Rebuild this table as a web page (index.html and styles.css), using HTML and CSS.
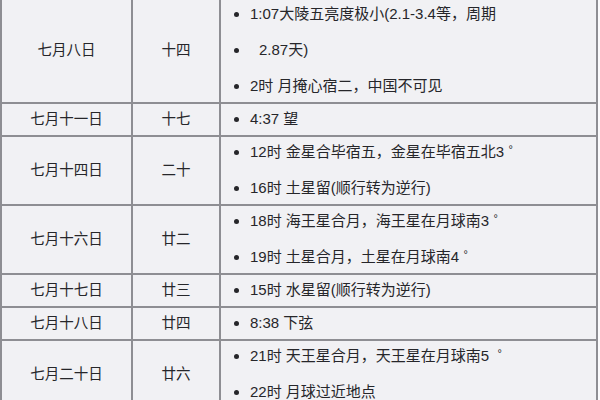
FILE: index.html
```html
<!DOCTYPE html>
<html lang="zh">
<head>
<meta charset="utf-8">
<link rel="stylesheet" href="styles.css">
</head>
<body>
<table class="almanac">
  <colgroup>
    <col class="c-date">
    <col class="c-lunar">
    <col class="c-events">
  </colgroup>
  <tbody>
    <tr>
      <td class="date">七月八日</td>
      <td class="lunar">十四</td>
      <td class="events"><ul>
        <li>1:07大陵五亮度极小(2.1-3.4等，周期</li>
        <li><span class="indent">2.87天)</span></li>
        <li>2时 月掩心宿二，中国不可见</li>
      </ul></td>
    </tr>
    <tr>
      <td class="date">七月十一日</td>
      <td class="lunar">十七</td>
      <td class="events"><ul><li>4:37 望</li></ul></td>
    </tr>
    <tr>
      <td class="date">七月十四日</td>
      <td class="lunar">二十</td>
      <td class="events"><ul>
        <li>12时 金星合毕宿五，金星在毕宿五北3 <span class="deg">°</span></li>
        <li>16时 土星留(顺行转为逆行)</li>
      </ul></td>
    </tr>
    <tr>
      <td class="date">七月十六日</td>
      <td class="lunar">廿二</td>
      <td class="events"><ul>
        <li>18时 海王星合月，海王星在月球南3 <span class="deg">°</span></li>
        <li>19时 土星合月，土星在月球南4 <span class="deg">°</span></li>
      </ul></td>
    </tr>
    <tr>
      <td class="date">七月十七日</td>
      <td class="lunar">廿三</td>
      <td class="events"><ul><li>15时 水星留(顺行转为逆行)</li></ul></td>
    </tr>
    <tr>
      <td class="date">七月十八日</td>
      <td class="lunar">廿四</td>
      <td class="events"><ul><li>8:38 下弦</li></ul></td>
    </tr>
    <tr>
      <td class="date">七月二十日</td>
      <td class="lunar">廿六</td>
      <td class="events"><ul>
        <li>21时 天王星合月，天王星在月球南5 &nbsp;<span class="deg">°</span></li>
        <li>22时 月球过近地点</li>
      </ul></td>
    </tr>
  </tbody>
</table>
</body>
</html>
```

FILE: styles.css
```css
html, body {
  margin: 0;
  padding: 0;
  background: #fbfbfd;
}

body {
  font-family: "Liberation Sans", "Noto Sans CJK SC", sans-serif;
  font-size: 14.5px;
  color: #26262a;
  overflow: hidden;
}

.almanac {
  border-collapse: collapse;
  table-layout: fixed;
  width: 596px;
  margin-top: -3px;
  background: #f1f1f4;
}

.c-date { width: 131px; }
.c-lunar { width: 88px; }
.c-events { width: 377px; }

.almanac td {
  border: 2px solid #8e8e93;
  padding: 7px 8px 8px 8px;
  line-height: 16px;
}

.date,
.lunar {
  text-align: center;
  vertical-align: middle;
}

.events {
  vertical-align: top;
  font-size: 15px;
}

.events ul {
  margin: 0;
  padding-left: 21px;
  list-style: disc;
}

.events li + li {
  margin-top: 20px;
}

.indent {
  padding-left: 9px;
}

.deg {
  font-size: 11px;
  vertical-align: 4px;
  line-height: 0;
}
```
